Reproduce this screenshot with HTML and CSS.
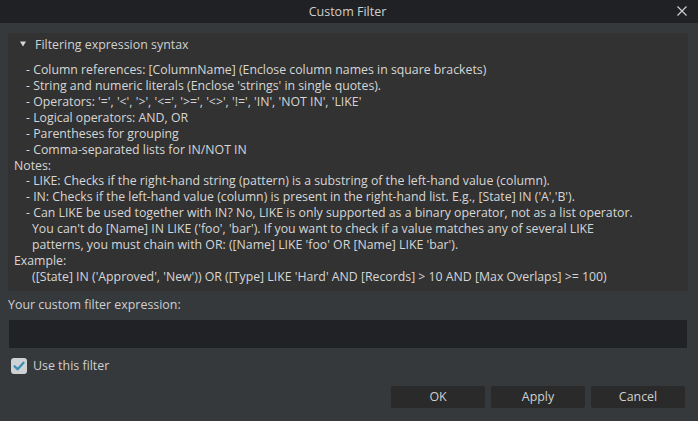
FILE: index.html
```html
<!DOCTYPE html>
<html>
<head>
<meta charset="utf-8">
<link rel="stylesheet" href="styles.css">
</head>
<body>
<div class="window">
  <div class="titlebar">
    <span class="title">Custom Filter</span>
    <svg class="close" width="10" height="10" viewBox="0 0 10 10"><path d="M0.5 0.5 L9.5 9.5 M9.5 0.5 L0.5 9.5" stroke="#d0d0d0" stroke-width="1.2" fill="none"/></svg>
  </div>
  <div class="content">
    <div class="group">
      <div class="group-header">
        <svg class="arrow" width="6" height="6" viewBox="0 0 6 6"><path d="M0 0.5 L6 0.5 L3 5.5 Z" fill="#d8d8d8"/></svg>
        <span>Filtering expression syntax</span>
      </div>
      <div class="syntax">
        <div class="ln i1">- Column references: [ColumnName] (Enclose column names in square brackets)</div>
        <div class="ln i1">- String and numeric literals (Enclose 'strings' in single quotes).</div>
        <div class="ln i1">- Operators: '=', '&lt;', '&gt;', '&lt;=', '&gt;=', '&lt;&gt;', '!=', 'IN', 'NOT IN', 'LIKE'</div>
        <div class="ln i1">- Logical operators: AND, OR</div>
        <div class="ln i1">- Parentheses for grouping</div>
        <div class="ln i1">- Comma-separated lists for IN/NOT IN</div>
        <div class="ln">Notes:</div>
        <div class="ln i1">- LIKE: Checks if the right-hand string (pattern) is a substring of the left-hand value (column).</div>
        <div class="ln i1">- IN: Checks if the left-hand value (column) is present in the right-hand list. E.g., [State] IN ('A','B').</div>
        <div class="ln i1">- Can LIKE be used together with IN? No, LIKE is only supported as a binary operator, not as a list operator.</div>
        <div class="ln i2">You can't do [Name] IN LIKE ('foo', 'bar'). If you want to check if a value matches any of several LIKE</div>
        <div class="ln i2">patterns, you must chain with OR: ([Name] LIKE 'foo' OR [Name] LIKE 'bar').</div>
        <div class="ln">Example:</div>
        <div class="ln i2">([State] IN ('Approved', 'New')) OR ([Type] LIKE 'Hard' AND [Records] &gt; 10 AND [Max Overlaps] &gt;= 100)</div>
      </div>
    </div>
    <div class="label">Your custom filter expression:</div>
    <div class="input"></div>
    <div class="check-row">
      <span class="checkbox">
        <svg width="16" height="16" viewBox="0 0 16 16"><path d="M3.6 8.3 L6.6 11.2 L12.5 4.7" stroke="#3a8db5" stroke-width="2.3" fill="none" stroke-linecap="round" stroke-linejoin="round"/></svg>
      </span>
      <span class="check-label">Use this filter</span>
    </div>
    <div class="buttons">
      <div class="btn">OK</div>
      <div class="btn">Apply</div>
      <div class="btn">Cancel</div>
    </div>
  </div>
</div>
</body>
</html>
```
FILE: styles.css
```css
html, body {
  margin: 0;
  padding: 0;
  background: #36393c;
}
body {
  font-family: "Open Sans", "Noto Sans", sans-serif;
  font-size: 12.4px;
  color: #d2d2d2;
  width: 698px;
  height: 421px;
  overflow: hidden;
}
.window {
  width: 698px;
  height: 421px;
  display: flex;
  flex-direction: column;
}
.titlebar {
  height: 23px;
  background: #202124;
  position: relative;
  display: flex;
  align-items: center;
  justify-content: center;
}
.title {
  font-size: 12.5px;
  color: #cfcfcf;
  line-height: 23px;
  margin-left: -3px;
}
.close {
  position: absolute;
  right: 11px;
  top: 6px;
}
.content {
  padding: 10px 10px 0 8px;
  display: flex;
  flex-direction: column;
}
.group {
  background: #323232;
  padding-bottom: 6px;
}
.group-header {
  height: 22px;
  display: flex;
  align-items: center;
  color: #d0d0d0;
}
.arrow {
  margin-left: 12px;
  margin-right: 9px;
  margin-top: -1px;
}
.syntax {
  padding: 7px 0 0 6px;
  color: #d6d6d6;
  font-size: 12.3px;
}
.ln {
  white-space: nowrap;
  line-height: 15.92px;
}
.i1 {
  padding-left: 12px;
}
.i2 {
  padding-left: 18px;
}
.label {
  line-height: 16px;
  margin-top: 6px;
  color: #cfcfcf;
}
.input {
  height: 28px;
  margin: 7px 1px 0 1px;
  background: #212225;
}
.check-row {
  display: flex;
  align-items: center;
  margin-top: 10px;
  margin-left: 3px;
  height: 16px;
}
.checkbox {
  width: 16px;
  height: 16px;
  border-radius: 3px;
  background: #cfd2d4;
  display: block;
}
.checkbox svg {
  display: block;
}
.check-label {
  margin-left: 6px;
  color: #d0d0d0;
}
.buttons {
  display: flex;
  justify-content: flex-end;
  gap: 6px;
  margin-top: 12px;
  margin-right: 3px;
}
.btn {
  width: 94px;
  height: 22px;
  line-height: 22px;
  text-align: center;
  background: #2a2a2a;
  border-radius: 2px;
  color: #d0d0d0;
}
```
